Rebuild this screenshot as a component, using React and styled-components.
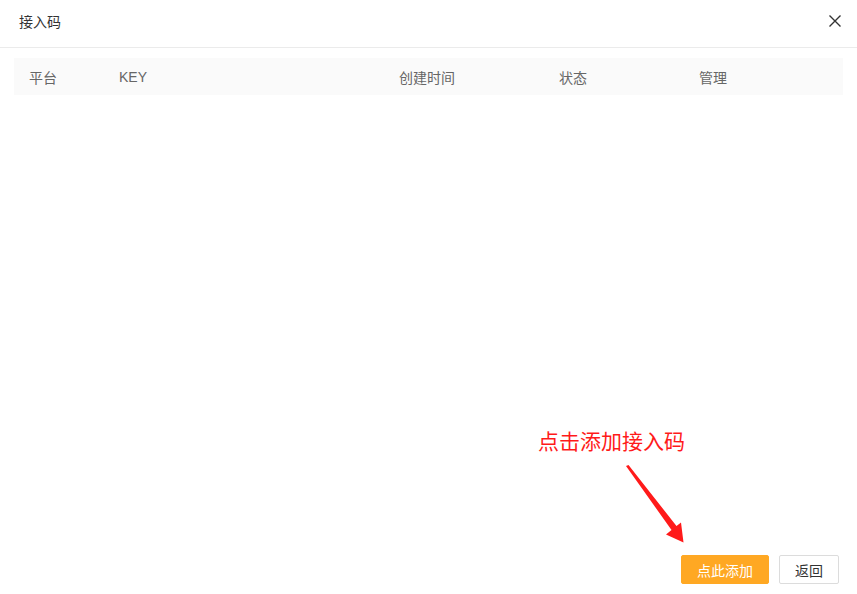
import React from 'react';
import styled, { createGlobalStyle } from 'styled-components';

const GlobalStyle = createGlobalStyle`
  html, body {
    margin: 0;
    padding: 0;
    background: #fff;
  }
  body {
    font-family: "Liberation Sans", "Noto Sans CJK SC", sans-serif;
  }
`

const Modal = styled.div`
  position: relative;
  width: 857px;
  height: 594px;
  display: flex;
  flex-direction: column;
  background: #fff;
  box-sizing: border-box;
`
const Header = styled.div`
  height: 48px;
  border-bottom: 1px solid #ebebeb;
  display: flex;
  align-items: center;
  justify-content: space-between;
  padding: 0 15px 6px 19px;
  box-sizing: border-box;
`
const Title = styled.h3`
  margin: 0;
  font-size: 14px;
  font-weight: 400;
  color: #333;
`
const Close = styled.button`
  border: 0;
  background: none;
  padding: 0;
  width: 14px;
  height: 14px;
  display: flex;
  cursor: pointer;
`
const Body = styled.div`
  flex: 1;
  padding: 10px 14px 0 14px;
`
const TableHead = styled.div`
  height: 37px;
  background: #fafafa;
  display: grid;
  grid-template-columns: 90px 280px 160px 140px 1fr;
  align-items: center;
  padding-left: 15px;
  font-size: 14px;
  color: #666;
`
const Cell = styled.div`
  white-space: nowrap;
`
const Footer = styled.div`
  display: flex;
  justify-content: flex-end;
  gap: 10px;
  padding: 0 18px 10px 0;
`
const Button = styled.button`
  height: 29px;
  padding: 0 15px;
  font-family: "Liberation Sans", "Noto Sans CJK SC", sans-serif;
  font-size: 14px;
  border-radius: 2px;
  cursor: pointer;
  border: 1px solid ${p => (p.$primary ? '#ffa823' : '#dcdcdc')};
  background: ${p => (p.$primary ? '#ffa823' : '#fff')};
  color: ${p => (p.$primary ? '#fff' : '#333')};
`
const Hint = styled.div`
  position: absolute;
  left: 538px;
  top: 426px;
  font-size: 21px;
  color: #ff1a1a;
  font-family: "Noto Sans CJK SC", sans-serif;
  line-height: 28px;
  white-space: nowrap;
`
const Arrow = styled.svg`
  position: absolute;
  left: 620px;
  top: 460px;
  width: 70px;
  height: 90px;
`

const columns = ['平台', 'KEY', '创建时间', '状态', '管理']

const App = () => {
  return (
    <Modal>
      <GlobalStyle />
      <Header>
        <Title>接入码</Title>
        <Close aria-label="close">
          <svg width="14" height="14" viewBox="0 0 14 14">
            <path d="M1.5 1.5 L12.5 12.5 M12.5 1.5 L1.5 12.5" stroke="#333" strokeWidth="1.4" />
          </svg>
        </Close>
      </Header>
      <Body>
        <TableHead>
          {columns.map(c => <Cell key={c}>{c}</Cell>)}
        </TableHead>
      </Body>
      <Hint>点击添加接入码</Hint>
      <Arrow viewBox="620 460 70 90">
        <polygon
          points="626,466 628.5,465 676.5,526 681,522.5 683.5,542.5 666,534.5 671.5,530"
          fill="#ff1a1a"
        />
      </Arrow>
      <Footer>
        <Button $primary>点此添加</Button>
        <Button>返回</Button>
      </Footer>
    </Modal>
  );
}

export default App;
